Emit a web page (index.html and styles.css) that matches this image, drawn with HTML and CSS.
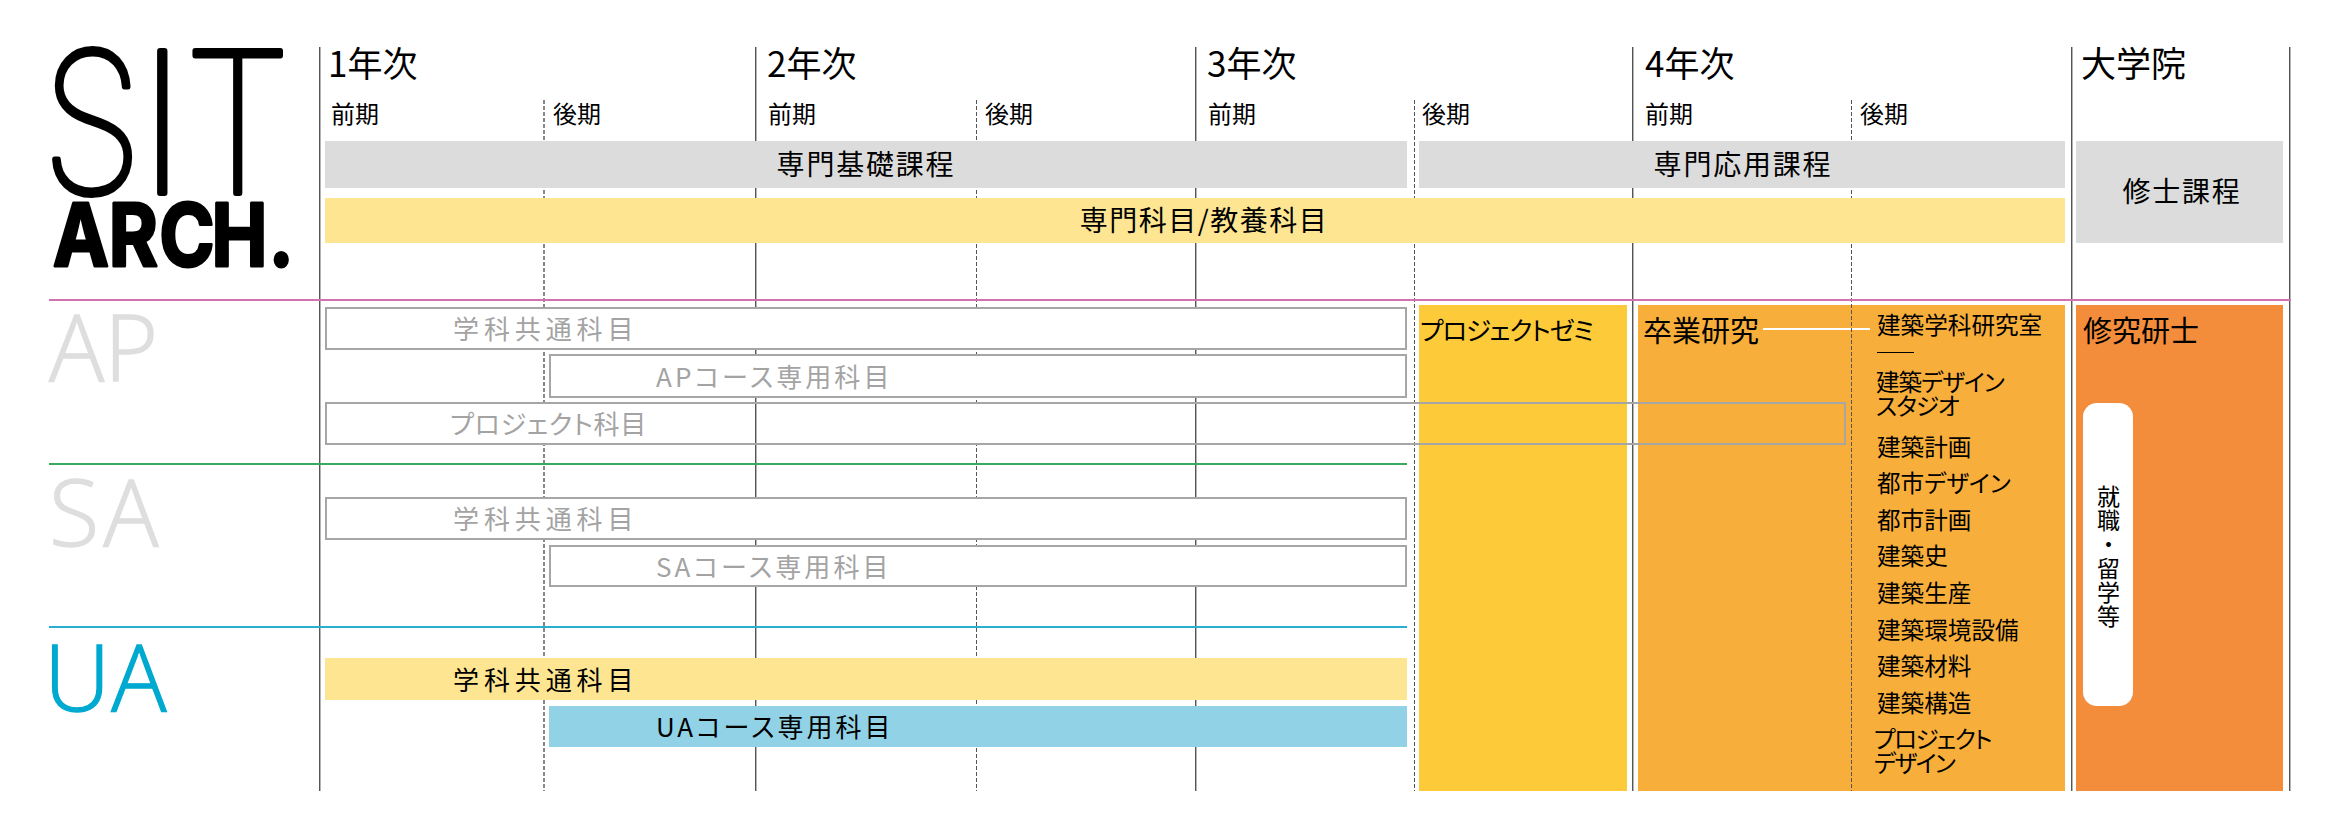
FILE: index.html
```html
<!DOCTYPE html>
<html lang="ja">
<head>
<meta charset="utf-8">
<title>SIT ARCH. カリキュラム</title>
<link rel="stylesheet" href="styles.css">
</head>
<body>
<main class="chart">
  <svg class="logo" viewBox="0 47 319 252" role="img" aria-label="SIT ARCH.">
    <text class="logo-sit" x="50" y="193" transform="scale(.84 1)">S</text>
    <text class="logo-sit" x="138" y="193">I</text>
    <text class="logo-sit" x="207" y="193" transform="scale(.89 1)">T</text>
    <text class="logo-arch" x="61 125 183 243 309" y="266" transform="scale(.87 1)">ARCH.</text>
  </svg>

  <div class="dash dash-soft at-d1"></div>
  <div class="dash at-d2"></div>
  <div class="mask"></div>

  <div class="vline at-y1"></div>
  <div class="vline at-y2"></div>
  <div class="vline at-y3"></div>
  <div class="vline at-y4"></div>
  <div class="vline at-g"></div>
  <div class="vline at-g2"></div>

  <div class="year y-1">1年次</div>
  <div class="year y-2">2年次</div>
  <div class="year y-3">3年次</div>
  <div class="year y-4">4年次</div>
  <div class="year y-g">大学院</div>

  <div class="term t-1">前期</div>
  <div class="term t-2">後期</div>
  <div class="term t-3">前期</div>
  <div class="term t-4">後期</div>
  <div class="term t-5">前期</div>
  <div class="term t-6">後期</div>
  <div class="term t-7">前期</div>
  <div class="term t-8">後期</div>

  <div class="block zemi"><span class="block-title small-title">プロジェクトゼミ</span></div>
  <div class="block thesis">
    <span class="block-title">卒業研究</span>
    <span class="connector"></span>
    <ul class="labs">
      <li>建築学科研究室</li>
      <li class="labs-rule"></li>
      <li class="labs-two">建築デザイン<br>スタジオ</li>
      <li class="labs-after">建築計画</li>
      <li>都市デザイン</li>
      <li>都市計画</li>
      <li>建築史</li>
      <li>建築生産</li>
      <li>建築環境設備</li>
      <li>建築材料</li>
      <li>建築構造</li>
      <li class="labs-two labs-out">プロジェクト<br>デザイン</li>
    </ul>
  </div>
  <div class="block master">
    <span class="block-title">修究研士</span>
    <div class="pill"><span class="pill-text">就職・留学等</span></div>
  </div>

  <div class="dash at-d3"></div>
  <div class="dash at-d4"></div>

  <div class="bar gray g-basic">専門基礎課程</div>
  <div class="bar gray g-applied">専門応用課程</div>
  <div class="bar gray g-master">修士課程</div>
  <div class="bar yellow g-subjects">専門科目/教養科目</div>

  <div class="rule rule-ap"></div>
  <div class="course ap">AP</div>
  <div class="bar outline wide c-a1">学科共通科目</div>
  <div class="bar outline c-a2">APコース専用科目</div>
  <div class="bar outline open wide c-a3">プロジェクト科目</div>

  <div class="rule rule-sa"></div>
  <div class="course sa">SA</div>
  <div class="bar outline wide c-s1">学科共通科目</div>
  <div class="bar outline c-s2">SAコース専用科目</div>

  <div class="rule rule-ua"></div>
  <div class="course ua">UA</div>
  <div class="bar yellow wide spaced c-u1">学科共通科目</div>
  <div class="bar blue spaced c-u2">UAコース専用科目</div>
</main>
</body>
</html>
```

FILE: styles.css
```css
html, body {
  margin: 0;
  background: #fff;
  overflow: hidden;
}

.chart {
  display: grid;
  width: 2334px;
  height: 838px;
  font-family: "Noto Sans CJK JP", "Noto Sans", sans-serif;
  font-weight: 400;
  font-feature-settings: "palt";
  color: #000;
  grid-template-columns:
    [page] 49px [label] 270px [y1] 6px [bar] 218px [d1] 6px [bar2] 206px [y2] 221px [d2] 219px
    [y3] 212px [barend] 7px [d3] 5px [ys] 208px [yse] 5px [y4] 6px [os] 208px [a3e] 5px [d4] 214px
    [oe] 6px [g] 5px [gs] 207px [ge] 6px [g2] 2px [end];
  grid-template-rows:
    [r0] 47px [top] 53px [term] 41px [g1] 47px [g1e] 10px [s1y] 45px [s1ye] 56px [pink] 6px [col] 2px
    [a1] 43px [a1e] 4px [a2] 44px [a2e] 4px [a3] 43px [a3e] 18px [green] 34px
    [s1] 43px [s1e] 5px [s2] 42px [s2e] 39px [blue] 32px
    [u1] 42px [u1e] 6px [u2] 41px [u2e] 44px [end];
}

/* Logo */
.logo {
  grid-column: page / y1;
  grid-row: top / pink;
  width: 319px;
  height: 252px;
  overflow: visible;
}
.logo-sit {
  font-family: Inter, "Liberation Sans", sans-serif;
  font-size: 195px;
  font-weight: 100;
  fill: #000;
  stroke: #000;
  stroke-width: 6px;
  stroke-linejoin: round;
  stroke-linecap: round;
  font-feature-settings: normal;
}
.logo-arch {
  font-family: Inter, "Liberation Sans", sans-serif;
  font-size: 86px;
  font-weight: 700;
  fill: #000;
  stroke: #000;
  stroke-width: 3px;
  stroke-linejoin: round;
  font-feature-settings: normal;
}

/* Time lines */
.vline {
  grid-row: top / end;
  width: 1px;
  justify-self: start;
  background: #555;
  border-right: 1px solid #b4b4b4;
}
.dash {
  grid-row: term / end;
  width: 1px;
  justify-self: start;
  background: repeating-linear-gradient(#555 0 4px, transparent 4px 6px);
}
.dash-soft {
  width: 2px;
  background: repeating-linear-gradient(#888 0 4px, transparent 4px 6px);
}
.at-y1 { grid-column: y1; }
.at-y2 { grid-column: y2; }
.at-y3 { grid-column: y3; }
.at-y4 { grid-column: y4; }
.at-g { grid-column: g; }
.at-g2 { grid-column: g2; }
.at-d1 { grid-column: d1; }
.at-d2 { grid-column: d2; }
.at-d3 { grid-column: d3; }
.at-d4 { grid-column: d4; }

.mask {
  grid-column: bar / barend;
  grid-row: a3 / a3e;
  background: #fff;
}

/* Header */
.year {
  grid-row: top / term;
  font-size: 35px;
  line-height: 30px;
  white-space: nowrap;
}
.y-1 { grid-column: y1 / y2; padding-left: 9px; }
.y-2 { grid-column: y2 / y3; padding-left: 12px; }
.y-3 { grid-column: y3 / y4; padding-left: 12px; }
.y-4 { grid-column: y4 / g; padding-left: 13px; }
.y-g { grid-column: g / g2; padding-left: 10px; }

.term {
  grid-row: term / g1;
  font-size: 24px;
  line-height: 25px;
  white-space: nowrap;
}
.t-1 { grid-column: y1 / d1; padding-left: 12px; }
.t-2 { grid-column: d1 / y2; padding-left: 10px; }
.t-3 { grid-column: y2 / d2; padding-left: 13px; }
.t-4 { grid-column: d2 / y3; padding-left: 9px; }
.t-5 { grid-column: y3 / d3; padding-left: 13px; }
.t-6 { grid-column: d3 / y4; padding-left: 8px; }
.t-7 { grid-column: y4 / d4; padding-left: 13px; }
.t-8 { grid-column: d4 / g; padding-left: 9px; }

/* Bars */
.bar {
  display: flex;
  align-items: center;
  justify-content: center;
  box-sizing: border-box;
  font-size: 28px;
  letter-spacing: 1.8px;
  padding-bottom: 4px;
  white-space: nowrap;
}
.gray { background: #dcdcdc; }
.yellow { background: #fde592; }
.blue { background: #91d2e6; }
.g-basic { grid-column: bar / barend; grid-row: g1 / g1e; }
.g-applied { grid-column: ys / oe; grid-row: g1 / g1e; padding-left: 2px; }
.g-master { grid-column: gs / ge; grid-row: g1 / s1ye; padding-left: 5px; }
.g-subjects { grid-column: bar / oe; grid-row: s1y / s1ye; padding-left: 18px; letter-spacing: 1.5px; }

.outline {
  border: 2px solid #a6a6a6;
  background: #fff;
  color: #a3a3a3;
  justify-content: flex-start;
  padding-left: 105px;
  padding-bottom: 2px;
  font-size: 26px;
  letter-spacing: 3.1px;
}
.open { background: transparent; }
.outline.wide { padding-left: 126px; letter-spacing: 4.9px; }
.outline.c-a3 { padding-left: 123px; letter-spacing: .7px; }
.spaced {
  justify-content: flex-start;
  font-size: 26px;
  letter-spacing: 3px;
  padding-left: 107px;
  padding-bottom: 2px;
}
.spaced.wide { padding-left: 128px; letter-spacing: 4.9px; }
.c-a1 { grid-column: bar / barend; grid-row: a1 / a1e; }
.c-a2 { grid-column: bar2 / barend; grid-row: a2 / a2e; }
.c-a3 { grid-column: bar / a3e; grid-row: a3 / a3e; }
.c-s1 { grid-column: bar / barend; grid-row: s1 / s1e; }
.c-s2 { grid-column: bar2 / barend; grid-row: s2 / s2e; }
.c-u1 { grid-column: bar / barend; grid-row: u1 / u1e; }
.c-u2 { grid-column: bar2 / barend; grid-row: u2 / u2e; }

/* Course rules and labels */
.rule {
  grid-column: label / end;
  height: 2px;
  align-self: start;
}
.rule-ap { grid-row: pink; background: #cf72ae; }
.rule-sa { grid-row: green; background: #3aaa5e; grid-column: label / barend; }
.rule-ua { grid-row: blue; background: #27b0d2; grid-column: label / barend; }

.course {
  grid-column: label / y1;
  align-self: start;
  font-family: "Open Sans", "Noto Sans", sans-serif;
  font-size: 92px;
  font-weight: 300;
  line-height: 92px;
  font-feature-settings: normal;
  -webkit-text-stroke: 1.3px currentColor;
}
.ap { grid-row: pink / a3e; color: #dedede; margin-top: 1px; }
.sa { grid-row: green / s2e; color: #dedede; margin-top: 2px; letter-spacing: 4px; }
.ua { grid-row: blue / end; color: #00a9d0; margin-top: 4px; margin-left: -5px; letter-spacing: 1px; }

/* Research blocks */
.block {
  grid-row: col / end;
  display: flex;
  box-sizing: border-box;
}
.block-title {
  font-size: 29px;
  line-height: 40px;
  white-space: nowrap;
}
.small-title {
  font-size: 25.5px;
  letter-spacing: -1.2px;
}
.zemi {
  grid-column: ys / yse;
  background: #fdcb3a;
  padding: 4px 0 0 1px;
}
.thesis {
  grid-column: os / oe;
  background: #f7ae3b;
  padding: 4px 0 0 5px;
}
.master {
  grid-column: gs / ge;
  flex-direction: column;
  align-items: flex-start;
  background: #f38d3b;
  padding: 4px 0 0 7px;
}
.connector {
  flex: none;
  width: 107px;
  height: 2px;
  margin: 19px 0 0 4px;
  background: #fff;
}
.labs {
  list-style: none;
  margin: 3px 0 0 7px;
  padding: 0;
  display: flex;
  flex-direction: column;
  gap: 12.6px;
  font-size: 23.6px;
  line-height: 24px;
  white-space: nowrap;
}
.labs-rule {
  width: 37px;
  height: 1px;
  margin: 3px 0 3.4px;
  background: #000;
}
.labs-two { margin-left: -1px; letter-spacing: -1px; }
.labs-after { margin-top: 4.4px; }
.labs-out { margin-left: -3px; letter-spacing: -1.6px; }

.pill {
  flex: none;
  display: flex;
  align-items: center;
  justify-content: center;
  width: 50px;
  height: 303px;
  margin: 54px 0 0 0;
  border-radius: 14px;
  background: #fff;
}
.pill-text {
  writing-mode: vertical-rl;
  font-size: 23px;
  letter-spacing: 1px;
  line-height: 1;
  padding-top: 4px;
  font-feature-settings: normal;
}
```
